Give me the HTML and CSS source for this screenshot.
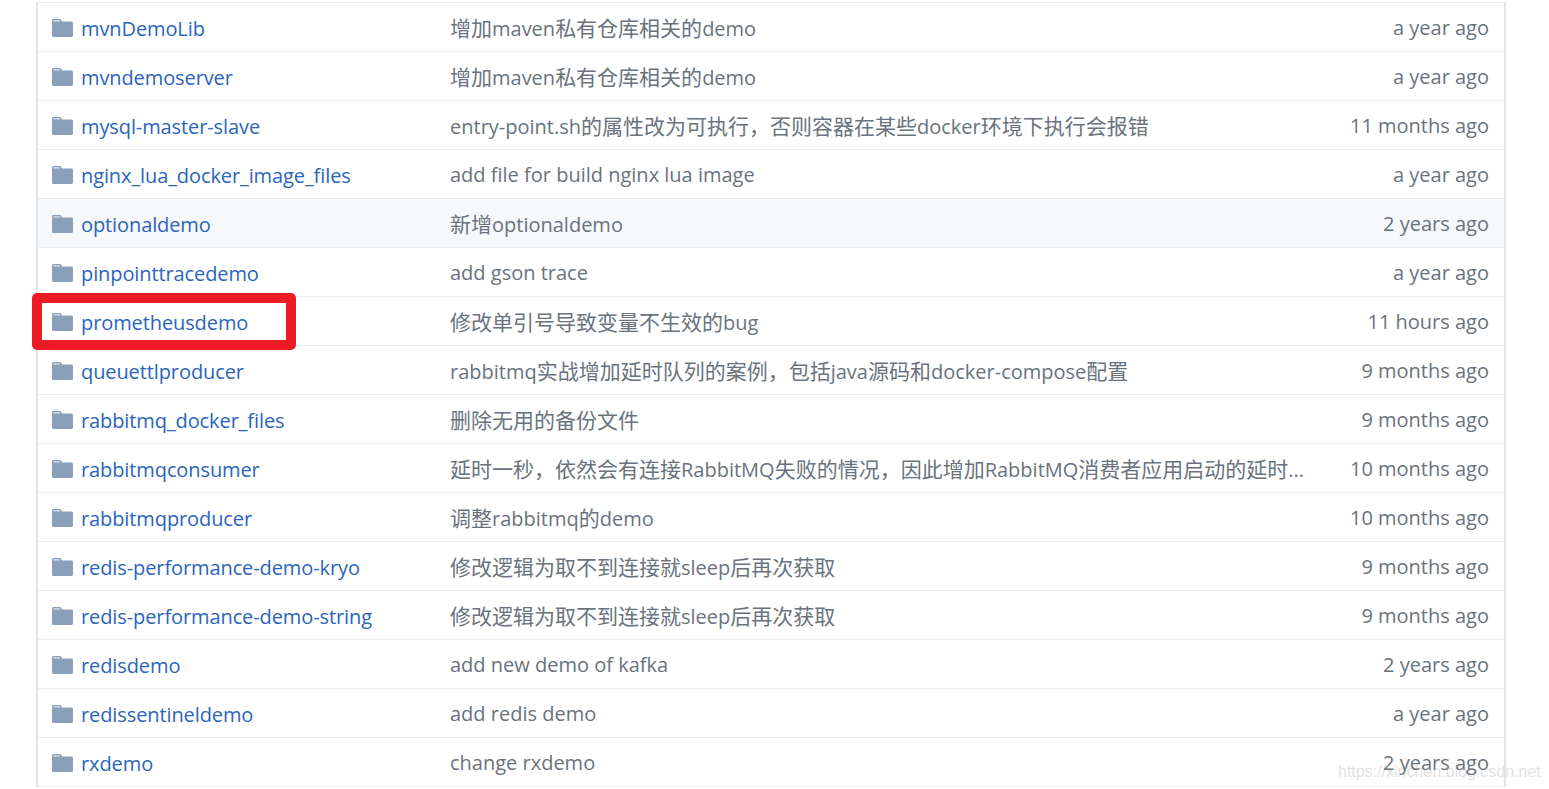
FILE: index.html
```html
<!DOCTYPE html>
<html lang="zh-CN">
<head>
    <meta charset="UTF-8">
    <title>Files</title>
    <link rel="stylesheet" href="styles.css">
</head>
<body>
    <svg class="sprite" width="0" height="0">
        <symbol id="folder" viewBox="0 0 21 18">
            <path fill="#8a9fb8" d="M1.500 0h6.200c.8 0 1.300.4 1.600 1L9.900 2.500H19.500c.8 0 1.500.7 1.500 1.500v12.500c0 .8-.7 1.500-1.500 1.500H1.500C.7 18 0 17.300 0 16.500V1.500C0 .7.700 0 1.500 0z"/>
            <path fill="#dfe6ee" d="M1.500 1.300h6.200l.5 1.200H1.300z"/>
        </symbol>
    </svg>

    <div class="file-list">
        <div class="file-row">
            <svg class="folder"><use href="#folder"/></svg>
            <a class="file-name">mvnDemoLib</a>
            <span class="commit-msg">增加<i>maven</i>私有仓库相关的<i>demo</i></span>
            <span class="age">a year ago</span>
        </div>
        <div class="file-row">
            <svg class="folder"><use href="#folder"/></svg>
            <a class="file-name">mvndemoserver</a>
            <span class="commit-msg">增加<i>maven</i>私有仓库相关的<i>demo</i></span>
            <span class="age">a year ago</span>
        </div>
        <div class="file-row">
            <svg class="folder"><use href="#folder"/></svg>
            <a class="file-name">mysql-master-slave</a>
            <span class="commit-msg"><i>entry-point.sh</i>的属性改为可执行，否则容器在某些<i>docker</i>环境下执行会报错</span>
            <span class="age">11 months ago</span>
        </div>
        <div class="file-row">
            <svg class="folder"><use href="#folder"/></svg>
            <a class="file-name">nginx_lua_docker_image_files</a>
            <span class="commit-msg"><i>add file for build nginx lua image</i></span>
            <span class="age">a year ago</span>
        </div>
        <div class="file-row hover">
            <svg class="folder"><use href="#folder"/></svg>
            <a class="file-name">optionaldemo</a>
            <span class="commit-msg">新增<i>optionaldemo</i></span>
            <span class="age">2 years ago</span>
        </div>
        <div class="file-row">
            <svg class="folder"><use href="#folder"/></svg>
            <a class="file-name">pinpointtracedemo</a>
            <span class="commit-msg"><i>add gson trace</i></span>
            <span class="age">a year ago</span>
        </div>
        <div class="file-row">
            <svg class="folder"><use href="#folder"/></svg>
            <a class="file-name">prometheusdemo</a>
            <span class="commit-msg">修改单引号导致变量不生效的<i>bug</i></span>
            <span class="age">11 hours ago</span>
        </div>
        <div class="file-row">
            <svg class="folder"><use href="#folder"/></svg>
            <a class="file-name">queuettlproducer</a>
            <span class="commit-msg"><i>rabbitmq</i>实战增加延时队列的案例，包括<i>java</i>源码和<i>docker-compose</i>配置</span>
            <span class="age">9 months ago</span>
        </div>
        <div class="file-row">
            <svg class="folder"><use href="#folder"/></svg>
            <a class="file-name">rabbitmq_docker_files</a>
            <span class="commit-msg">删除无用的备份文件</span>
            <span class="age">9 months ago</span>
        </div>
        <div class="file-row">
            <svg class="folder"><use href="#folder"/></svg>
            <a class="file-name">rabbitmqconsumer</a>
            <span class="commit-msg">延时一秒，依然会有连接<i>RabbitMQ</i>失败的情况，因此增加<i>RabbitMQ</i>消费者应用启动的延时<i>...</i></span>
            <span class="age">10 months ago</span>
        </div>
        <div class="file-row">
            <svg class="folder"><use href="#folder"/></svg>
            <a class="file-name">rabbitmqproducer</a>
            <span class="commit-msg">调整<i>rabbitmq</i>的<i>demo</i></span>
            <span class="age">10 months ago</span>
        </div>
        <div class="file-row">
            <svg class="folder"><use href="#folder"/></svg>
            <a class="file-name">redis-performance-demo-kryo</a>
            <span class="commit-msg">修改逻辑为取不到连接就<i>sleep</i>后再次获取</span>
            <span class="age">9 months ago</span>
        </div>
        <div class="file-row">
            <svg class="folder"><use href="#folder"/></svg>
            <a class="file-name">redis-performance-demo-string</a>
            <span class="commit-msg">修改逻辑为取不到连接就<i>sleep</i>后再次获取</span>
            <span class="age">9 months ago</span>
        </div>
        <div class="file-row">
            <svg class="folder"><use href="#folder"/></svg>
            <a class="file-name">redisdemo</a>
            <span class="commit-msg"><i>add new demo of kafka</i></span>
            <span class="age">2 years ago</span>
        </div>
        <div class="file-row">
            <svg class="folder"><use href="#folder"/></svg>
            <a class="file-name">redissentineldemo</a>
            <span class="commit-msg"><i>add redis demo</i></span>
            <span class="age">a year ago</span>
        </div>
        <div class="file-row">
            <svg class="folder"><use href="#folder"/></svg>
            <a class="file-name">rxdemo</a>
            <span class="commit-msg"><i>change rxdemo</i></span>
            <span class="age">2 years ago</span>
        </div>
    </div>

    <div class="red-box"></div>
    <div class="watermark">https://xinchen.blog.csdn.net</div>
</body>
</html>
```

FILE: styles.css
```css
html, body {
    height: 100%;
    overflow: hidden;
}

body {
    margin: 0;
    background: #fff;
    font-family: "Open Sans", "Noto Sans CJK SC", sans-serif;
    font-size: 20px;
    position: relative;
}

.sprite {
    position: absolute;
}

.file-list {
    margin: 2px 0 0 36px;
    width: 1470px;
    box-sizing: border-box;
    border-top: 1px solid #eaecef;
    border-left: 2px solid #e1e4e8;
    border-right: 2px solid #e1e4e8;
}

.file-row {
    display: grid;
    grid-template-columns: 21px 377px 860px 1fr;
    align-items: center;
    height: 49px;
    box-sizing: border-box;
    padding: 0 15px 0 14px;
    border-bottom: 1px solid #eaecef;
    white-space: nowrap;
}

.file-row.hover {
    background: #f6f8fa;
}

.folder {
    width: 21px;
    height: 18px;
    margin-top: 2px;
}

.file-name {
    margin-left: 8px;
    margin-top: 3px;
    letter-spacing: -0.1px;
    color: #2b65bd;
}

/* chinese text runs a bit larger than the latin in the commit column */
.commit-msg {
    color: #6a737d;
    font-size: 21px;
}

.commit-msg i {
    font-style: normal;
    font-size: 20px;
}

.age {
    margin-top: 1px;
    color: #6a737d;
    text-align: right;
}

.red-box {
    position: absolute;
    left: 32px;
    top: 293px;
    width: 264px;
    height: 57px;
    box-sizing: border-box;
    border: 10px solid #ed1c24;
    border-radius: 5px;
}

.watermark {
    position: absolute;
    left: 1338px;
    top: 763px;
    font-family: "Liberation Sans", sans-serif;
    font-size: 16px;
    color: rgba(150, 150, 150, 0.3);
    white-space: nowrap;
}
```
